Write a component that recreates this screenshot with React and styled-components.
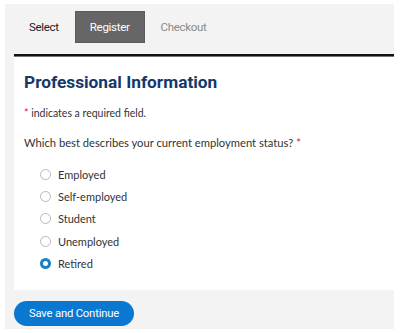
import { useState } from "react";
import styled, { createGlobalStyle } from "styled-components";

const GlobalStyle = createGlobalStyle`
  body {
    margin: 0;
    background: #ffffff;
    font-family: Lato, "Liberation Sans", sans-serif;
  }
`;

const StyledPanel = styled.div`
  margin: 4px 6px 4px 5px;
  height: 325px;
  background-color: #f3f3f3;
  padding: 7px 0 0 9px;
  box-sizing: border-box;
  display: flex;
  flex-direction: column;
`;

const StyledTabs = styled.div`
  display: flex;
  gap: 1px;
  height: 32px;
  margin-bottom: 11px;
`;

const StyledTab = styled.div`
  display: flex;
  align-items: center;
  padding: 0 14px;
  font-family: Roboto, "Liberation Sans", sans-serif;
  font-size: 11.5px;
  letter-spacing: -0.3px;
  color: ${(p) => (p.$active ? "#ffffff" : p.$done ? "#222222" : "#8a8a8a")};
  background-color: ${(p) => (p.$active ? "#666666" : "transparent")};
  border: ${(p) => (p.$active ? "1px solid #5a5a5a" : "1px solid transparent")};
`;

const StyledCard = styled.div`
  background-color: #ffffff;
  border-top: 2px solid #111111;
  box-shadow: 0 1px 0 #777777 inset;
  padding: 16px 10px 0;
  height: 236px;
  box-sizing: border-box;
`;

const StyledHeading = styled.h2`
  margin: 0 0 15px;
  font-family: Roboto, "Liberation Sans", sans-serif;
  font-weight: 700;
  font-size: 17.3px;
  letter-spacing: 0;
  color: #15386a;
`;

const StyledNote = styled.p`
  margin: 0 0 17px;
  font-size: 10.5px;
  color: #333333;
`;

const StyledStar = styled.span`
  color: #d0202a;
`;

const StyledQuestion = styled.p`
  margin: 0 0 18px;
  font-size: 11.2px;
  color: #333333;
`;

const StyledOptions = styled.div`
  display: flex;
  flex-direction: column;
  gap: 8.4px;
  padding-left: 16px;
`;

const StyledOption = styled.label`
  display: flex;
  align-items: center;
  gap: 7px;
  height: 14px;
  font-size: 11px;
  color: #333333;
  cursor: pointer;
`;

const StyledRadio = styled.span`
  width: 11px;
  height: 11px;
  border-radius: 50%;
  box-sizing: border-box;
  border: ${(p) => (p.$checked ? "3.5px solid #1a7fc6" : "1px solid #b8b8b8")};
  background-color: #ffffff;
`;

const StyledFooter = styled.div`
  padding-top: 11px;
`;

const StyledButton = styled.button`
  height: 25px;
  padding: 0 15px;
  border: none;
  border-radius: 13px;
  background-color: #0a78d0;
  color: #ffffff;
  font-family: Roboto, "Liberation Sans", sans-serif;
  font-size: 11.3px;
  letter-spacing: -0.2px;
  cursor: pointer;
`;

const OPTIONS = ["Employed", "Self-employed", "Student", "Unemployed", "Retired"];

const App = () => {
  const [status, setStatus] = useState("Retired");

  return (
    <>
      <GlobalStyle />
      <StyledPanel>
        <StyledTabs>
          <StyledTab $done>Select</StyledTab>
          <StyledTab $active>Register</StyledTab>
          <StyledTab>Checkout</StyledTab>
        </StyledTabs>
        <StyledCard>
          <StyledHeading>Professional Information</StyledHeading>
          <StyledNote>
            <StyledStar>*</StyledStar> indicates a required field.
          </StyledNote>
          <StyledQuestion>
            Which best describes your current employment status? <StyledStar>*</StyledStar>
          </StyledQuestion>
          <StyledOptions>
            {OPTIONS.map((o) => (
              <StyledOption key={o} onClick={() => setStatus(o)}>
                <StyledRadio $checked={status === o} />
                {o}
              </StyledOption>
            ))}
          </StyledOptions>
        </StyledCard>
        <StyledFooter>
          <StyledButton>Save and Continue</StyledButton>
        </StyledFooter>
      </StyledPanel>
    </>
  );
};

export default App;
